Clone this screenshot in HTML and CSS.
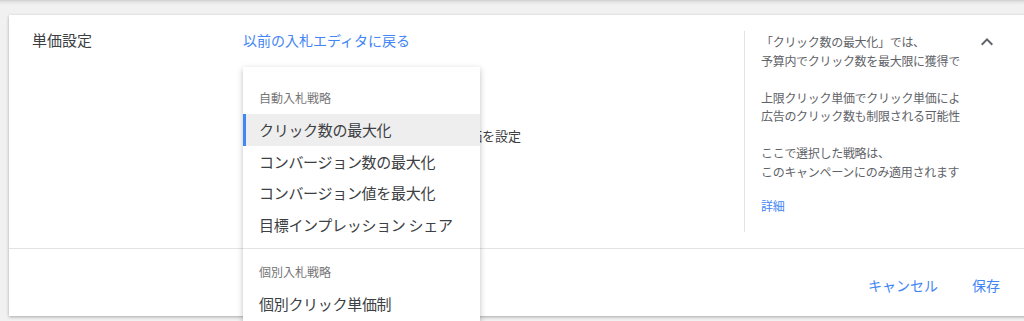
FILE: index.html
```html
<!DOCTYPE html>
<html lang="ja">
<head>
    <meta charset="UTF-8">
    <meta name="viewport" content="width=device-width, initial-scale=1.0">
    <title>単価設定</title>
    <link rel="stylesheet" href="styles.css">
</head>
<body>
    <div class="page">
        <div class="card">
            <div class="setting">
                <div class="setting-label">単価設定</div>

                <div class="setting-body">
                    <a class="link" href="#">以前の入札エディタに戻る</a>
                    <div class="option">上限クリック単価を設定</div>
                </div>

                <div class="help">
                    <p>
                        <span>「クリック数の最大化」では、</span>
                        <span>予算内でクリック数を最大限に獲得できるよう入札単価が自動的に設定されます</span>
                    </p>
                    <p>
                        <span>上限クリック単価でクリック単価によって制限をかけると、</span>
                        <span>広告のクリック数も制限される可能性があります</span>
                    </p>
                    <p>
                        <span>ここで選択した戦略は、</span>
                        <span>このキャンペーンにのみ適用されます</span>
                    </p>
                    <a class="help-link" href="#">詳細</a>
                </div>

                <svg class="collapse" width="24" height="24" viewBox="0 0 24 24">
                    <path d="M12 8l-6 6 1.41 1.41L12 10.83l4.59 4.58L18 14z"/>
                </svg>
            </div>

            <div class="actions">
                <button class="text-button">キャンセル</button>
                <button class="text-button">保存</button>
            </div>

            <!-- bid strategy dropdown, open over the form -->
            <div class="menu">
                <div class="menu-group">
                    <div class="menu-heading">自動入札戦略</div>
                    <div class="menu-item selected">クリック数の最大化</div>
                    <div class="menu-item">コンバージョン数の最大化</div>
                    <div class="menu-item">コンバージョン値を最大化</div>
                    <div class="menu-item">目標インプレッション シェア</div>
                </div>
                <div class="menu-group">
                    <div class="menu-heading">個別入札戦略</div>
                    <div class="menu-item">個別クリック単価制</div>
                </div>
            </div>
        </div>
    </div>
</body>
</html>
```

FILE: styles.css
```css
html,
body {
    margin: 0;
    height: 100%;
    overflow: hidden;
    background-color: #f1f1f1;
    font-family: "Noto Sans CJK JP", "Noto Sans", sans-serif;
    color: #3c4043;
}

.page {
    padding-top: 15px;
    min-height: 100%;
    background: linear-gradient(to bottom, #cfcfcf 0, #e4e4e4 2px, #f1f1f1 5px) no-repeat;
}

.card {
    position: relative;
    width: 1040px;
    margin-left: 9px;
    background-color: #fff;
    box-shadow: 0 1px 3px rgba(0, 0, 0, 0.3);
}

.setting {
    display: flex;
    padding: 16px 0 16px 23px;
    border-bottom: 1px solid #e3e3e3;
}

.setting-label {
    width: 211px;
    flex-shrink: 0;
    font-size: 15px;
    line-height: 18px;
}

.setting-body {
    width: 501px;
    flex-shrink: 0;
}

.link {
    display: block;
    font-size: 14px;
    line-height: 18px;
    color: #4285f4;
    text-decoration: none;
}

.option {
    margin-top: 78px;
    padding-left: 135px;
    font-size: 13px;
    line-height: 18px;
}

.help {
    width: 199px;
    flex-shrink: 0;
    padding: 2px 0 17px 16px;
    border-left: 1px solid #e3e3e3;
    overflow: hidden;
    font-size: 12px;
    line-height: 18.5px;
    letter-spacing: -0.3px;
    color: #5f6368;
}

.help p {
    margin: 0 0 18.5px;
    white-space: nowrap;
}

.help span {
    display: block;
}

.help-link {
    display: block;
    margin-top: -3px;
    color: #4285f4;
    text-decoration: none;
}

.collapse {
    flex-shrink: 0;
    margin: -1px 0 0 15px;
    fill: #5f6368;
}

.actions {
    display: flex;
    justify-content: flex-end;
    gap: 34px;
    padding: 26px 49px 21px 0;
}

.text-button {
    padding: 0;
    border: none;
    background: none;
    font-family: inherit;
    font-size: 14px;
    line-height: 20px;
    color: #4285f4;
    cursor: pointer;
}

.menu {
    position: absolute;
    top: 52px;
    left: 234px;
    width: 237px;
    padding: 8px 0;
    background-color: #fff;
    box-shadow: 0 2px 6px rgba(0, 0, 0, 0.25);
    z-index: 2;
}

.menu-group {
    padding-bottom: 8px;
}

.menu-group + .menu-group {
    border-top: 1px solid #e3e3e3;
}

.menu-heading {
    padding: 15px 16px 8px;
    font-size: 12px;
    line-height: 16px;
    color: #757575;
}

.menu-item {
    height: 31.5px;
    padding: 0 16px;
    font-size: 15px;
    line-height: 31.5px;
    letter-spacing: -0.3px;
    white-space: nowrap;
}

.menu-item.selected {
    background-color: #eeeeee;
    box-shadow: inset 3px 0 #4285f4;
}
```
